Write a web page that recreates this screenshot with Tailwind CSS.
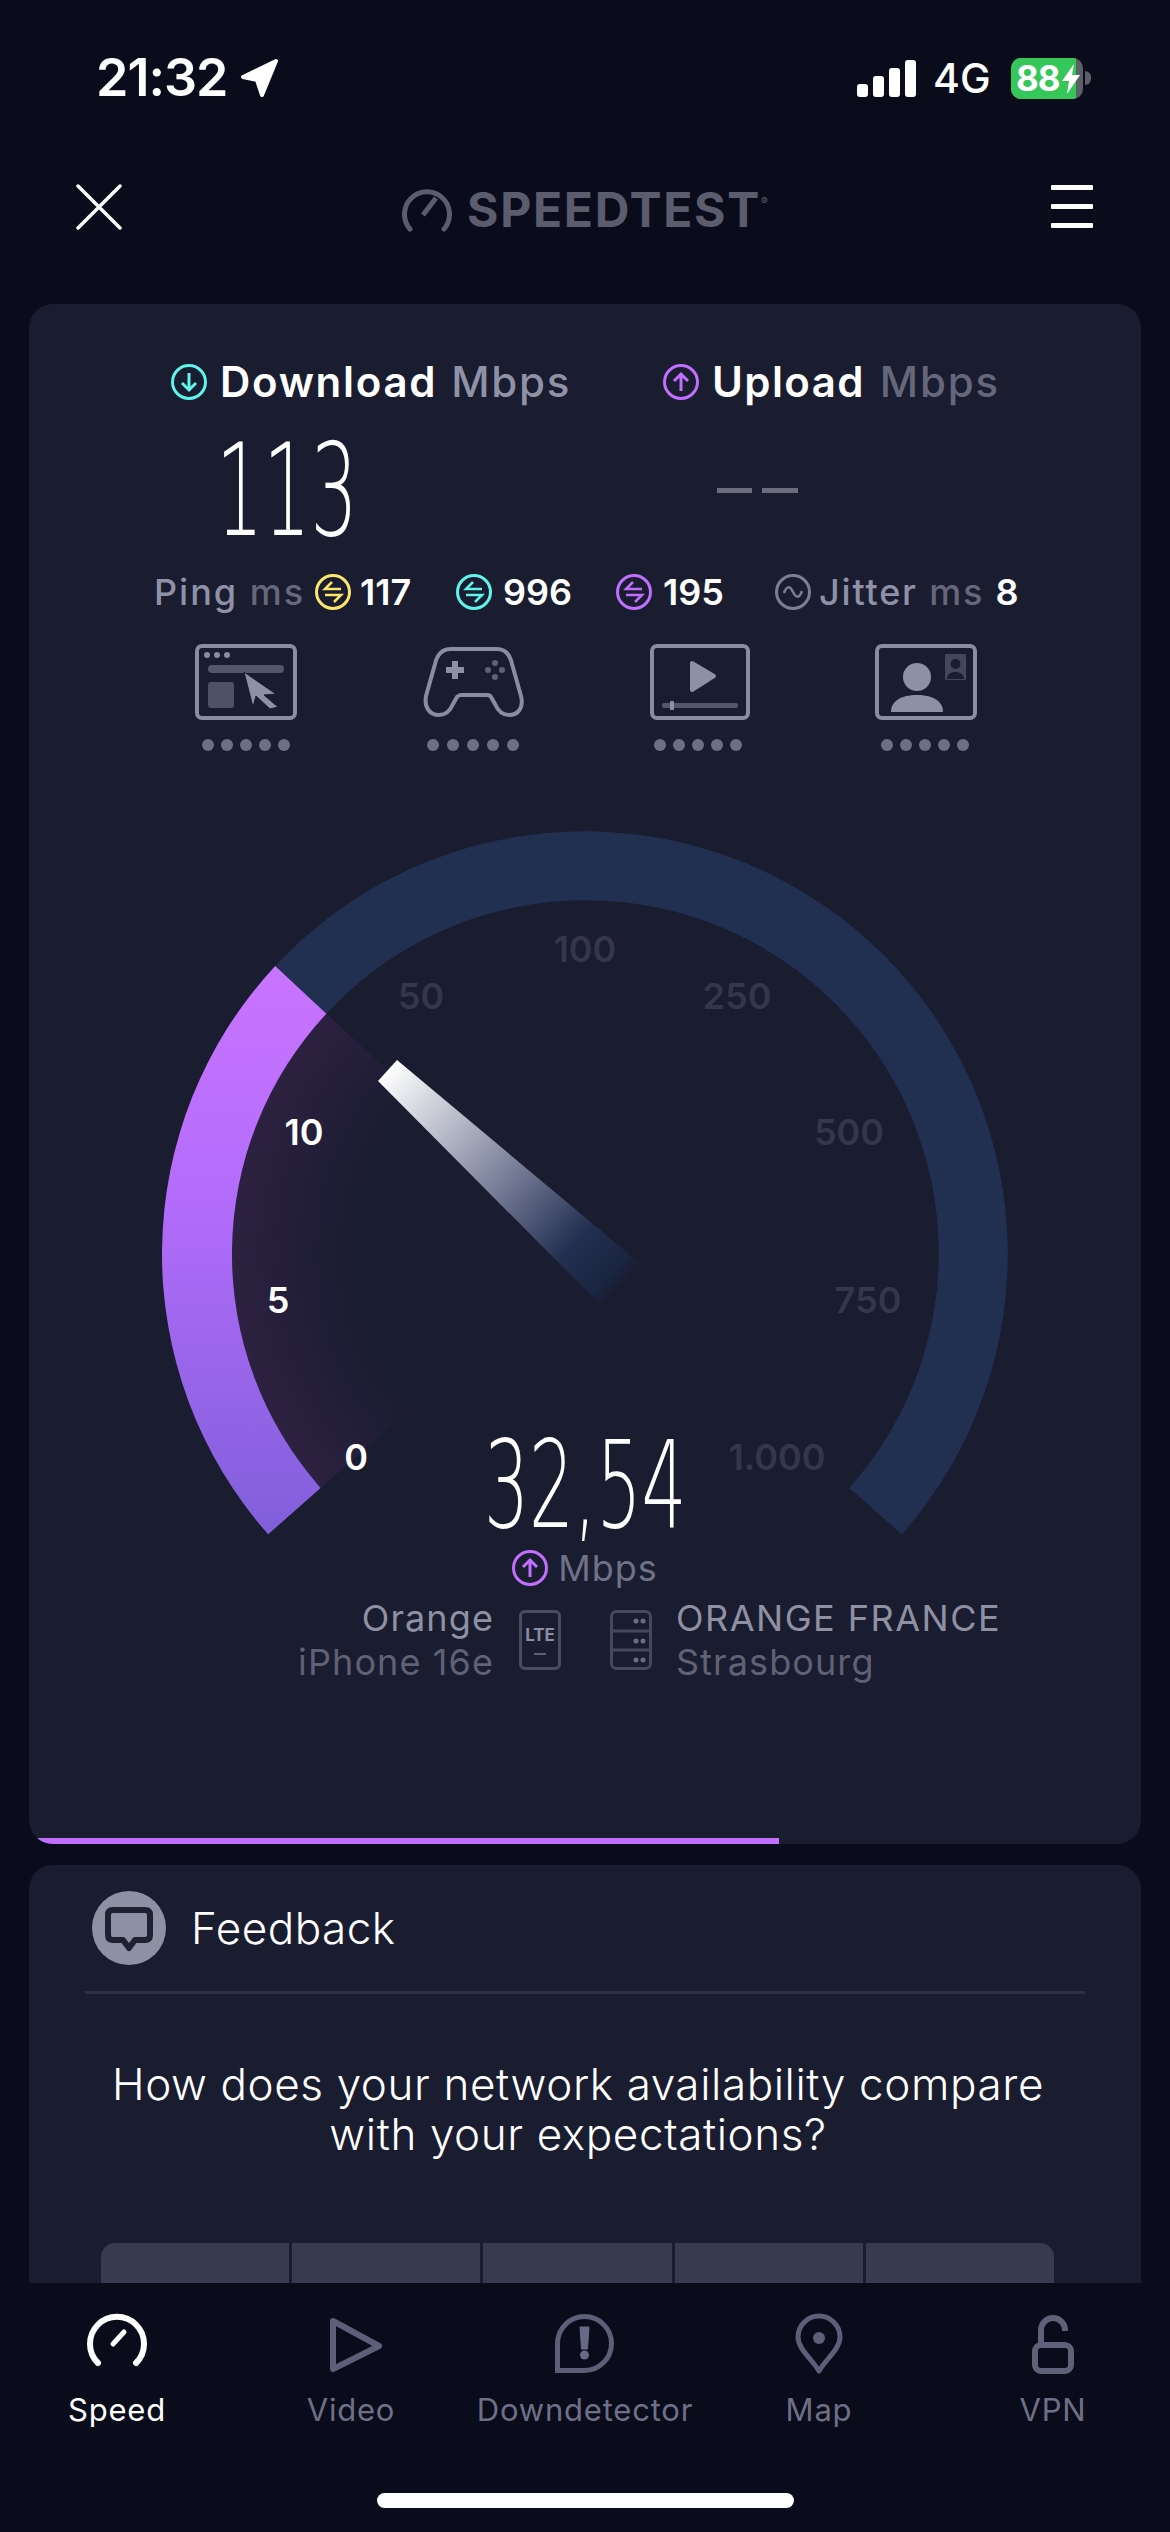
<!DOCTYPE html>
<html lang="en">
<head>
<meta charset="utf-8">
<title>Speedtest</title>
<script src="https://cdn.jsdelivr.net/npm/@tailwindcss/browser@4"></script>
</head>
<body class="bg-[#0a0c1b]">
<div class="w-[1170px] h-[2532px] flex flex-col overflow-hidden bg-[#0a0c1b] text-white font-['Inter',sans-serif]">

  <!-- status bar -->
  <div class="h-[150px] shrink-0 flex items-start justify-between pt-[54px] pl-[96px] pr-[79px]">
    <div class="flex items-center gap-[12px] h-[48px]">
      <span class="text-[52px] leading-none font-semibold tracking-[-1px]">21:32</span>
      <svg class="w-[40px] h-[40px]" viewBox="0 0 40 40"><path d="M37 3 L4 19 L18 22 L23 37 Z" fill="#fff" stroke="#fff" stroke-width="4" stroke-linejoin="round"/></svg>
    </div>
    <div class="flex items-center h-[48px]">
      <div class="flex items-end gap-[5px] h-[37px]">
        <span class="w-[11px] h-[13px] bg-white rounded-[3px]"></span>
        <span class="w-[11px] h-[21px] bg-white rounded-[3px]"></span>
        <span class="w-[11px] h-[29px] bg-white rounded-[3px]"></span>
        <span class="w-[11px] h-[37px] bg-white rounded-[3px]"></span>
      </div>
      <span class="ml-[17px] w-[60px] text-[41px] leading-none font-medium">4G</span>
      <div class="ml-[18px] flex items-center">
        <div class="relative w-[72px] h-[41px] rounded-[10px] overflow-hidden bg-[#5d5f66]">
          <div class="absolute inset-y-0 left-0 w-[65px] bg-[#35c759]"></div>
          <span class="absolute left-[5px] top-[2px] text-[35px] leading-[36px] font-bold tracking-[-1px]">88</span>
          <svg class="absolute left-[49px] top-[6px] w-[22px] h-[30px]" viewBox="0 0 22 30"><path d="M14 0 L2 17 H9 L7 30 L20 11 H12 Z" fill="#fff"/></svg>
        </div>
        <span class="ml-[2px] w-[6px] h-[14px] rounded-r-full bg-[#5d5f66]"></span>
      </div>
    </div>
  </div>

  <!-- header -->
  <div class="h-[154px] shrink-0 relative flex items-start justify-between pl-[76px] pr-[77px] pt-[34px]">
    <svg class="w-[46px] h-[46px]" viewBox="0 0 46 46"><path d="M2 2 L44 44 M44 2 L2 44" stroke="#fff" stroke-width="3.5" stroke-linecap="round"/></svg>
    <div class="flex items-center mt-[2px] ml-[280px]">
      <svg class="w-[50px] h-[44px]" viewBox="0 0 50 44"><path d="M8 41 A22.5 22.5 0 1 1 42 41" fill="none" stroke="#5b5d6e" stroke-width="5" stroke-linecap="round"/><path d="M21 27 L34 10" stroke="#5b5d6e" stroke-width="5"/></svg>
      <span class="ml-[15px] text-[48px] leading-none font-bold text-[#5b5d6e] tracking-[1.7px]">SPEEDTEST<sup class="text-[10px] align-super font-normal tracking-normal">®</sup></span>
    </div>
    <div class="flex flex-col gap-[14px] w-[42px] ml-auto mt-[1px]">
      <span class="h-[5px] bg-white rounded-[1px]"></span>
      <span class="h-[5px] bg-white rounded-[1px]"></span>
      <span class="h-[5px] bg-white rounded-[1px]"></span>
    </div>
  </div>

  <!-- scrolling content -->
  <div class="h-[1979px] shrink-0 overflow-hidden px-[29px] flex flex-col gap-[21px]">

    <!-- result card -->
    <div class="relative h-[1540px] shrink-0 bg-[#1a1c30] rounded-[24px] overflow-hidden pt-[56px]">

      <!-- download / upload titles -->
      <div class="grid grid-cols-[634px_1fr] h-[44px] text-[42px] leading-[44px]">
        <div class="flex items-center pl-[142px]">
          <svg class="w-[36px] h-[36px]" viewBox="0 0 36 36"><circle cx="18" cy="18" r="16.5" fill="none" stroke="#5ff5ea" stroke-width="3"/><path d="M18 9 V26 M11 19 L18 26 L25 19" fill="none" stroke="#5ff5ea" stroke-width="3"/></svg>
          <span class="ml-[13px] font-semibold tracking-[1.7px]">Download</span>
          <span class="ml-[14px] font-medium text-[#8f91a6] tracking-[1.8px]">Mbps</span>
        </div>
        <div class="flex items-center">
          <svg class="w-[36px] h-[36px]" viewBox="0 0 36 36"><circle cx="18" cy="18" r="16.5" fill="none" stroke="#c06fff" stroke-width="3"/><path d="M18 27 V10 M11 17 L18 10 L25 17" fill="none" stroke="#c06fff" stroke-width="3"/></svg>
          <span class="ml-[13px] font-semibold tracking-[1.4px]">Upload</span>
          <span class="ml-[15px] font-medium text-[#65677b] tracking-[1.8px]">Mbps</span>
        </div>
      </div>

      <!-- big numbers -->
      <div class="mt-[34px] h-[100px] relative grid grid-cols-[688px_1fr]">
        <div class="pl-[187px] pt-[3px]">
          <span class="block origin-left scale-x-[0.58] font-['DejaVu_Sans',sans-serif] font-extralight text-[128px] leading-[100px]">113</span>
        </div>
        <div class="flex gap-[10px] pt-[50px]">
          <span class="w-[35px] h-[5px] bg-[#6c6e80]"></span>
          <span class="w-[36px] h-[5px] bg-[#6c6e80]"></span>
        </div>
      </div>

      <!-- ping and jitter -->
      <div class="mt-[36px] h-[36px] flex items-center pl-[125px] text-[36px] leading-[36px]">
        <span class="w-[161px] shrink-0 font-medium text-[#8f91a6] tracking-[2px]">Ping <span class="text-[#65677b]">ms</span></span>
        <svg class="w-[36px] h-[36px] shrink-0" viewBox="0 0 36 36"><circle cx="18" cy="18" r="16.5" fill="none" stroke="#fbe56d" stroke-width="3"/><path d="M26 15 H10 L17 8 M10 21 H26 L19 28" fill="none" stroke="#fbe56d" stroke-width="2.5"/></svg>
        <span class="w-[96px] shrink-0 ml-[9px] font-semibold">117</span>
        <svg class="w-[36px] h-[36px] shrink-0" viewBox="0 0 36 36"><circle cx="18" cy="18" r="16.5" fill="none" stroke="#5ff5ea" stroke-width="3"/><path d="M26 15 H10 L17 8 M10 21 H26 L19 28" fill="none" stroke="#5ff5ea" stroke-width="2.5"/></svg>
        <span class="w-[113px] shrink-0 ml-[11px] font-semibold">996</span>
        <svg class="w-[36px] h-[36px] shrink-0" viewBox="0 0 36 36"><circle cx="18" cy="18" r="16.5" fill="none" stroke="#c06fff" stroke-width="3"/><path d="M26 15 H10 L17 8 M10 21 H26 L19 28" fill="none" stroke="#c06fff" stroke-width="2.5"/></svg>
        <span class="w-[112px] shrink-0 ml-[11px] font-semibold">195</span>
        <svg class="w-[36px] h-[36px] shrink-0" viewBox="0 0 36 36"><circle cx="18" cy="18" r="16.5" fill="none" stroke="#7c7e91" stroke-width="3"/><path d="M9 19 C12 11 15 12 18 18 C21 24 24 25 27 17" fill="none" stroke="#7c7e91" stroke-width="2.5"/></svg>
        <span class="ml-[8px] font-medium text-[#8f91a6] whitespace-nowrap tracking-[1.8px]">Jitter <span class="text-[#65677b]">ms</span> <span class="text-white font-semibold tracking-normal">8</span></span>
      </div>

      <!-- quality icons -->
      <div class="mt-[34px] h-[76px] flex pl-[166px]">
        <svg class="w-[102px] h-[76px] shrink-0" viewBox="0 0 102 76">
          <rect x="2" y="2" width="98" height="72" rx="5" fill="none" stroke="#8a8c9f" stroke-width="4"/>
          <circle cx="12" cy="11" r="3" fill="#8a8c9f"/><circle cx="22" cy="11" r="3" fill="#8a8c9f"/><circle cx="32" cy="11" r="3" fill="#8a8c9f"/>
          <rect x="13" y="21" width="76" height="8" rx="4" fill="#55576b"/>
          <rect x="13" y="38" width="26" height="26" rx="3" fill="#4f5165"/>
          <path d="M49 28 L81 50 L69 51 L83 63 L75 65 L61 52 L58 63 Z" fill="#8e90a5" stroke="#1a1c30" stroke-width="1"/>
        </svg>
        <svg class="ml-[126px] w-[102px] h-[76px] shrink-0" viewBox="0 0 102 72">
          <path d="M28 3 H74 C82 3 87 9 89 18 L98 50 C101 62 95 69 86 69 C79 69 75 65 72 58 L68 51 C67 49 65 49 64 49 H38 C36 49 35 50 34 51 L30 58 C27 65 23 69 16 69 C7 69 1 62 3 50 L12 18 C14 9 19 3 28 3Z" fill="none" stroke="#8a8c9f" stroke-width="4"/>
          <path d="M32 15 V33 M23 24 H41" stroke="#8e90a5" stroke-width="6"/>
          <circle cx="72" cy="17" r="3" fill="#5f6175"/><circle cx="72" cy="31" r="3" fill="#5f6175"/><circle cx="65" cy="24" r="3" fill="#5f6175"/><circle cx="79" cy="24" r="3" fill="#5f6175"/>
        </svg>
        <svg class="ml-[125px] w-[100px] h-[76px] shrink-0" viewBox="0 0 100 76">
          <rect x="2" y="2" width="96" height="72" rx="5" fill="none" stroke="#8a8c9f" stroke-width="4"/>
          <path d="M42 19 L64 32 L42 46 Z" fill="#8e90a5" stroke="#8e90a5" stroke-width="4" stroke-linejoin="round"/>
          <rect x="12" y="59" width="76" height="5" rx="2" fill="#55576b"/>
          <rect x="20" y="57" width="4" height="9" rx="1" fill="#8e90a5"/>
        </svg>
        <svg class="ml-[125px] w-[102px] h-[76px] shrink-0" viewBox="0 0 102 76">
          <rect x="2" y="2" width="98" height="72" rx="5" fill="none" stroke="#8a8c9f" stroke-width="4"/>
          <ellipse cx="42" cy="33" rx="14" ry="14" fill="#8e90a5"/>
          <path d="M16 68 C16 57 26 51 42 51 C58 51 68 57 68 68 Z" fill="#8e90a5"/>
          <rect x="70" y="10" width="21" height="26" rx="1" fill="#44465a"/>
          <circle cx="80.5" cy="20" r="5" fill="#1a1c30"/>
          <path d="M72 35 C72 30 76 28 80.5 28 C85 28 89 30 89 35 Z" fill="#1a1c30"/>
        </svg>
      </div>

      <!-- rating dots -->
      <div class="mt-[19px] h-[12px] flex pl-[173px]">
        <div class="flex gap-[7px] w-[218px] shrink-0"><span class="w-[12px] h-[12px] rounded-full bg-[#6d6f82]"></span><span class="w-[12px] h-[12px] rounded-full bg-[#6d6f82]"></span><span class="w-[12px] h-[12px] rounded-full bg-[#6d6f82]"></span><span class="w-[12px] h-[12px] rounded-full bg-[#6d6f82]"></span><span class="w-[12px] h-[12px] rounded-full bg-[#6d6f82]"></span></div>
        <div class="flex gap-[8px] w-[227px] shrink-0 ml-[7px]"><span class="w-[12px] h-[12px] rounded-full bg-[#6d6f82]"></span><span class="w-[12px] h-[12px] rounded-full bg-[#6d6f82]"></span><span class="w-[12px] h-[12px] rounded-full bg-[#6d6f82]"></span><span class="w-[12px] h-[12px] rounded-full bg-[#6d6f82]"></span><span class="w-[12px] h-[12px] rounded-full bg-[#6d6f82]"></span></div>
        <div class="flex gap-[7px] w-[227px] shrink-0"><span class="w-[12px] h-[12px] rounded-full bg-[#6d6f82]"></span><span class="w-[12px] h-[12px] rounded-full bg-[#6d6f82]"></span><span class="w-[12px] h-[12px] rounded-full bg-[#6d6f82]"></span><span class="w-[12px] h-[12px] rounded-full bg-[#6d6f82]"></span><span class="w-[12px] h-[12px] rounded-full bg-[#6d6f82]"></span></div>
        <div class="flex gap-[7px] shrink-0"><span class="w-[12px] h-[12px] rounded-full bg-[#6d6f82]"></span><span class="w-[12px] h-[12px] rounded-full bg-[#6d6f82]"></span><span class="w-[12px] h-[12px] rounded-full bg-[#6d6f82]"></span><span class="w-[12px] h-[12px] rounded-full bg-[#6d6f82]"></span><span class="w-[12px] h-[12px] rounded-full bg-[#6d6f82]"></span></div>
      </div>

      <!-- gauge, viewBox is in page coordinates -->
      <div class="relative mt-[69px] w-[1112px] h-[720px]">
        <svg class="absolute inset-0 w-[1112px] h-[720px]" viewBox="29 820 1112 720">
          <defs>
            <linearGradient id="arcFill" gradientUnits="userSpaceOnUse" x1="0" y1="966" x2="0" y2="1534">
              <stop offset="0" stop-color="#c974ff"/><stop offset="0.4" stop-color="#b46cfb"/><stop offset="1" stop-color="#805fda"/>
            </linearGradient>
            <radialGradient id="glowFill" gradientUnits="userSpaceOnUse" cx="585" cy="1254" r="353">
              <stop offset="0.66" stop-color="#1a1c30"/><stop offset="0.8" stop-color="#221e38"/><stop offset="1" stop-color="#2c2140"/>
            </radialGradient>
            <linearGradient id="needleFill" gradientUnits="userSpaceOnUse" x1="387" y1="1070" x2="622" y2="1286">
              <stop offset="0" stop-color="#ffffff"/><stop offset="0.54" stop-color="#6d7490"/><stop offset="0.8" stop-color="#232f50"/><stop offset="0.95" stop-color="#1a2540"/><stop offset="1" stop-color="#1a1c30"/>
            </linearGradient>
          </defs>
          <path d="M320.6 1487.9 A353 353 0 0 1 326.4 1013.7 L585 1254 Z" fill="url(#glowFill)"/>
          <path d="M275.2 966 A423 423 0 0 1 901.8 1534.3 L849.4 1487.9 A353 353 0 0 0 326.4 1013.7 Z" fill="#213051"/>
          <path d="M268.2 1534.3 A423 423 0 0 1 275.2 966 L326.4 1013.7 A353 353 0 0 0 320.6 1487.9 Z" fill="url(#arcFill)"/>
          <path d="M397 1060 L378 1081 L602 1306.5 L642 1265 Z" fill="url(#needleFill)"/>
        </svg>
        <span class="absolute left-[556px] top-[129px] -translate-x-1/2 -translate-y-1/2 text-[36px] font-semibold text-[#34374a]">100</span>
        <span class="absolute left-[392px] top-[176px] -translate-x-1/2 -translate-y-1/2 text-[36px] font-semibold text-[#34374a]">50</span>
        <span class="absolute left-[708px] top-[176px] -translate-x-1/2 -translate-y-1/2 text-[36px] font-semibold text-[#34374a]">250</span>
        <span class="absolute left-[820px] top-[312px] -translate-x-1/2 -translate-y-1/2 text-[36px] font-semibold text-[#34374a]">500</span>
        <span class="absolute left-[839px] top-[480px] -translate-x-1/2 -translate-y-1/2 text-[36px] font-semibold text-[#34374a]">750</span>
        <span class="absolute left-[748px] top-[637px] -translate-x-1/2 -translate-y-1/2 text-[36px] font-semibold text-[#34374a]">1.000</span>
        <span class="absolute left-[327px] top-[637px] -translate-x-1/2 -translate-y-1/2 text-[36px] font-semibold">0</span>
        <span class="absolute left-[249px] top-[480px] -translate-x-1/2 -translate-y-1/2 text-[36px] font-semibold">5</span>
        <span class="absolute left-[275px] top-[312px] -translate-x-1/2 -translate-y-1/2 text-[36px] font-semibold">10</span>
        <span class="absolute left-[455px] top-[610px] w-[220px] origin-left scale-x-[0.58] font-['DejaVu_Sans',sans-serif] font-extralight text-[122px] leading-[110px] whitespace-nowrap">32,54</span>
      </div>

      <!-- current unit -->
      <div class="mt-[10px] h-[36px] flex items-center justify-center">
        <svg class="w-[36px] h-[36px]" viewBox="0 0 36 36"><circle cx="18" cy="18" r="16.5" fill="none" stroke="#c06fff" stroke-width="3"/><path d="M18 27 V10 M11 17 L18 10 L25 17" fill="none" stroke="#c06fff" stroke-width="3"/></svg>
        <span class="ml-[10px] text-[36px] leading-none text-[#6e7187] tracking-[1px]">Mbps</span>
      </div>

      <!-- carrier and server -->
      <div class="mt-[10px] flex items-center h-[88px] text-[36px] leading-[44px] tracking-[1.1px]">
        <div class="w-[465px] text-right">
          <div class="text-[#8f91a3]">Orange</div>
          <div class="text-[#5f6174]">iPhone 16e</div>
        </div>
        <div class="relative ml-[25px] w-[42px] h-[60px] rounded-[6px] border-[3px] border-[#4a4c60] flex flex-col items-center tracking-normal">
          <span class="mt-[12px] text-[17px] leading-[20px] font-bold text-[#8c8ea2]">LTE</span>
          <span class="mt-[8px] w-[12px] h-[2px] bg-[#5f6174]"></span>
        </div>
        <svg class="ml-[49px] w-[42px] h-[60px]" viewBox="0 0 42 60">
          <rect x="1.5" y="1.5" width="39" height="57" rx="5" fill="none" stroke="#46485c" stroke-width="3"/>
          <path d="M1 21 H41 M1 40 H41" stroke="#46485c" stroke-width="3"/>
          <circle cx="26" cy="11" r="2.5" fill="#6a6c80"/><circle cx="33" cy="11" r="2.5" fill="#6a6c80"/>
          <circle cx="26" cy="31" r="2.5" fill="#6a6c80"/><circle cx="33" cy="31" r="2.5" fill="#6a6c80"/>
          <circle cx="26" cy="50" r="2.5" fill="#6a6c80"/><circle cx="33" cy="50" r="2.5" fill="#6a6c80"/>
        </svg>
        <div class="ml-[24px]">
          <div class="text-[#8f91a3] whitespace-nowrap tracking-[1.5px]">ORANGE FRANCE</div>
          <div class="text-[#5f6174]">Strasbourg</div>
        </div>
      </div>

      <!-- test progress -->
      <div class="absolute left-0 bottom-0 w-[750px] h-[6px] bg-[#c06fff]"></div>
    </div>

    <!-- feedback card -->
    <div class="shrink-0 h-[500px] bg-[#1a1c30] rounded-t-[24px]">
      <div class="mx-[56px] h-[129px] flex items-center border-b-[3px] border-[#2e3044]">
        <svg class="ml-[7px] -mt-[1px] w-[74px] h-[74px] shrink-0" viewBox="0 0 74 74">
          <circle cx="37" cy="37" r="37" fill="#8e90a3"/>
          <path d="M21 19 H53 Q58 19 58 24 V44 Q58 49 53 49 H43 L37 57 L31 49 H21 Q16 49 16 44 V24 Q16 19 21 19 Z" fill="none" stroke="#1f2133" stroke-width="6" stroke-linejoin="round"/>
        </svg>
        <span class="ml-[25px] text-[44px] leading-none font-light tracking-[0.5px]">Feedback</span>
      </div>
      <p class="mt-[65px] text-center text-[44px] leading-[50px] font-light tracking-[0.6px] pr-[14px]">How does your network availability compare<br>with your expectations?</p>
      <div class="mt-[84px] mx-[72px] w-[953px] grid grid-cols-5 gap-[3px] rounded-t-[14px] overflow-hidden">
        <div class="h-[100px] bg-[#383a50] pt-[35px] text-center text-[38px] leading-none font-medium">1</div>
        <div class="h-[100px] bg-[#383a50] pt-[35px] text-center text-[38px] leading-none font-medium">2</div>
        <div class="h-[100px] bg-[#383a50] pt-[35px] text-center text-[38px] leading-none font-medium">3</div>
        <div class="h-[100px] bg-[#383a50] pt-[35px] text-center text-[38px] leading-none font-medium">4</div>
        <div class="h-[100px] bg-[#383a50] pt-[35px] text-center text-[38px] leading-none font-medium">5</div>
      </div>
    </div>
  </div>

  <!-- tab bar -->
  <div class="relative h-[249px] shrink-0 bg-[#0a0c1b] grid grid-cols-5 px-0 pt-[30px] text-[31px] leading-[36px] tracking-[0.8px] text-[#6e7088] text-center">
    <div class="flex flex-col items-center text-white">
      <svg class="w-[64px] h-[62px]" viewBox="0 0 64 62"><path d="M13 50 A27 27 0 1 1 51 50" fill="none" stroke="#fff" stroke-width="6" stroke-linecap="round"/><path d="M28 31 L39 19" stroke="#fff" stroke-width="5" stroke-linecap="round"/></svg>
      <span class="mt-[17px]">Speed</span>
    </div>
    <div class="flex flex-col items-center">
      <svg class="w-[64px] h-[62px]" viewBox="0 0 64 62"><path d="M14 8 L60 33 L14 56 Z" fill="none" stroke="#5d5f79" stroke-width="6" stroke-linejoin="round"/></svg>
      <span class="mt-[17px]">Video</span>
    </div>
    <div class="flex flex-col items-center">
      <svg class="w-[64px] h-[62px]" viewBox="0 0 64 62"><path d="M4.5 57.5 V30.5 A27 27 0 1 1 31.5 57.5 Z" fill="none" stroke="#5d5f79" stroke-width="5"/><path d="M27 14 H36 L34.5 36 H28.5 Z" fill="#686a85" stroke="#686a85" stroke-width="1" stroke-linejoin="round"/><circle cx="31.5" cy="42" r="4.5" fill="#686a85"/></svg>
      <span class="mt-[17px]">Downdetector</span>
    </div>
    <div class="flex flex-col items-center">
      <svg class="w-[64px] h-[62px]" viewBox="0 0 64 62"><path d="M32 58 C25 46 11 36 11 24 A21 21 0 0 1 53 24 C53 36 39 46 32 58 Z" fill="none" stroke="#5d5f79" stroke-width="5" stroke-linejoin="round"/><circle cx="32" cy="25" r="6" fill="#5d5f79"/></svg>
      <span class="mt-[17px]">Map</span>
    </div>
    <div class="flex flex-col items-center">
      <svg class="w-[64px] h-[62px]" viewBox="0 0 64 62"><rect x="14" y="32" width="36" height="26" rx="6" fill="none" stroke="#5f6179" stroke-width="6"/><path d="M20 31 V17 A12 12 0 0 1 44 17 V18" fill="none" stroke="#5f6179" stroke-width="6"/></svg>
      <span class="mt-[17px]">VPN</span>
    </div>
    <div class="absolute left-[377px] top-[210px] w-[417px] h-[15px] rounded-full bg-white"></div>
  </div>
</div>
</body>
</html>
